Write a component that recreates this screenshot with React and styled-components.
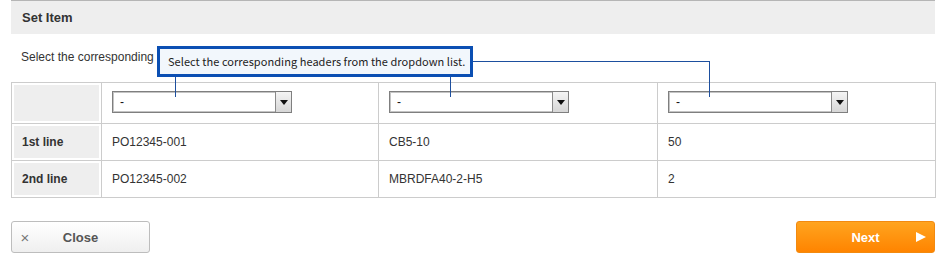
import React from 'react';
import styled, { createGlobalStyle } from 'styled-components';

const GlobalStyle = createGlobalStyle`
  body {
    margin: 0;
    background: #fff;
    font-family: 'Liberation Sans', Arial, sans-serif;
    color: #333;
  }
`;

const columns = [90, 277, 279, 278];

const rows = [
  { label: '1st line', values: ['PO12345-001', 'CB5-10', '50'] },
  { label: '2nd line', values: ['PO12345-002', 'MBRDFA40-2-H5', '2'] },
];

// connector lines between the tooltip and the three dropdowns
const connectors = [
  { left: 164, top: 77, width: 1, height: 20 },
  { left: 439, top: 77, width: 1, height: 20 },
  { left: 462, top: 61, width: 237, height: 1 },
  { left: 698, top: 61, width: 1, height: 36 },
];

function SelectBox() {
  return (
    <StSelect>
      <StSelectValue>-</StSelectValue>
      <StArrow>
        <svg width="8" height="5" viewBox="0 0 8 5">
          <path d="M0 0H8L4 5Z" fill="#111" />
        </svg>
      </StArrow>
    </StSelect>
  );
}

function App() {
  return (
    <>
      <GlobalStyle />
      <StPage>
        <StHeader>Set Item</StHeader>
        <StIntro>Select the corresponding headers from the dropdown list.</StIntro>

        <StTable>
          <colgroup>
            {columns.map((w, i) => (
              <col key={i} style={{ width: w }} />
            ))}
          </colgroup>
          <tbody>
            <tr>
              <StLabelCell />
              {[0, 1, 2].map((i) => (
                <StSelectCell key={i}>
                  <SelectBox />
                </StSelectCell>
              ))}
            </tr>
            {rows.map((row) => (
              <tr key={row.label}>
                <StLabelCell>{row.label}</StLabelCell>
                {row.values.map((v, i) => (
                  <StCell key={i}>{v}</StCell>
                ))}
              </tr>
            ))}
          </tbody>
        </StTable>

        <StFooter>
          <StCloseBtn>
            <StCloseX>×</StCloseX>
            <span>Close</span>
            <span />
          </StCloseBtn>
          <StNextBtn>
            <span />
            <span>Next</span>
            <StNextArrow />
          </StNextBtn>
        </StFooter>

        <StTooltip>Select the corresponding headers from the dropdown list.</StTooltip>
        {connectors.map((c, i) => (
          <StLine key={i} style={c} />
        ))}
      </StPage>
    </>
  );
}

export default App;

const StPage = styled.div`
  position: relative;
  width: 924px;
  margin-left: 11px;
  padding-bottom: 3px;
`;

const StHeader = styled.div`
  height: 33px;
  border-top: 1px solid #b5b5b5;
  background: #eeeeee;
  padding-left: 11px;
  font-size: 13px;
  font-weight: bold;
  line-height: 33px;
  color: #333;
`;

const StIntro = styled.p`
  margin: 0;
  padding: 15px 0 0 10px;
  height: 33px;
  font-size: 12px;
  line-height: 16px;
  color: #333;
`;

const StTable = styled.table`
  width: 924px;
  border-collapse: collapse;
  table-layout: fixed;
  font-size: 12px;
  color: #333;
`;

const StLabelCell = styled.td`
  border: 1px solid #cccccc;
  background: #eeeeee;
  box-shadow: inset 0 0 0 2px #fff;
  padding: 10px 10px;
  height: 16px;
  font-weight: bold;
  line-height: 16px;
`;

const StSelectCell = styled.td`
  border: 1px solid #cccccc;
  padding: 8px 10px 10px;
  height: 22px;
`;

const StCell = styled.td`
  border: 1px solid #cccccc;
  padding: 10px 10px;
  height: 16px;
  line-height: 16px;
`;

const StSelect = styled.div`
  box-sizing: border-box;
  width: 180px;
  height: 22px;
  display: flex;
  align-items: stretch;
  border: 1px solid #7f7f7f;
  box-shadow: inset 0 0 0 1px #c4c4c4;
  background: #fff;
`;

const StSelectValue = styled.span`
  flex: 1;
  padding-left: 7px;
  font-size: 12px;
  line-height: 20px;
  color: #111;
`;

const StArrow = styled.span`
  width: 15px;
  display: flex;
  align-items: center;
  justify-content: center;
  border-left: 1px solid #8a8a8a;
  background: linear-gradient(#f4f4f4, #d6d6d6);
`;

const StFooter = styled.div`
  display: flex;
  justify-content: space-between;
  margin-top: 23px;
`;

const StButton = styled.button`
  box-sizing: border-box;
  width: 139px;
  height: 32px;
  padding: 0;
  display: grid;
  grid-template-columns: 26px 1fr 26px;
  align-items: center;
  justify-items: center;
  border-radius: 3px;
  font-family: 'Liberation Sans', Arial, sans-serif;
  font-size: 13px;
  font-weight: bold;
  cursor: pointer;
`;

const StCloseBtn = styled(StButton)`
  border: 1px solid #bdbdbd;
  background: linear-gradient(#ffffff, #efefef);
  color: #555;
`;

const StCloseX = styled.span`
  font-size: 15px;
  font-weight: normal;
  color: #777;
`;

const StNextBtn = styled(StButton)`
  border: 1px solid #f28a10;
  background: linear-gradient(#ffa41f, #ff8400);
  color: #fff;
`;

const StNextArrow = styled.span`
  width: 0;
  height: 0;
  border-left: 10px solid #fff;
  border-top: 5.5px solid transparent;
  border-bottom: 5.5px solid transparent;
`;

const StTooltip = styled.div`
  position: absolute;
  left: 146px;
  top: 46px;
  box-sizing: border-box;
  width: 316px;
  height: 31px;
  border: 3px solid #0b4fb3;
  background: #f2f7fc;
  padding-left: 8px;
  font-family: 'Noto Sans CJK JP', 'DejaVu Sans', sans-serif;
  font-size: 11px;
  letter-spacing: 0.05px;
  line-height: 25px;
  color: #222;
  white-space: nowrap;
`;

const StLine = styled.span`
  position: absolute;
  background: #1d4f9e;
`;
